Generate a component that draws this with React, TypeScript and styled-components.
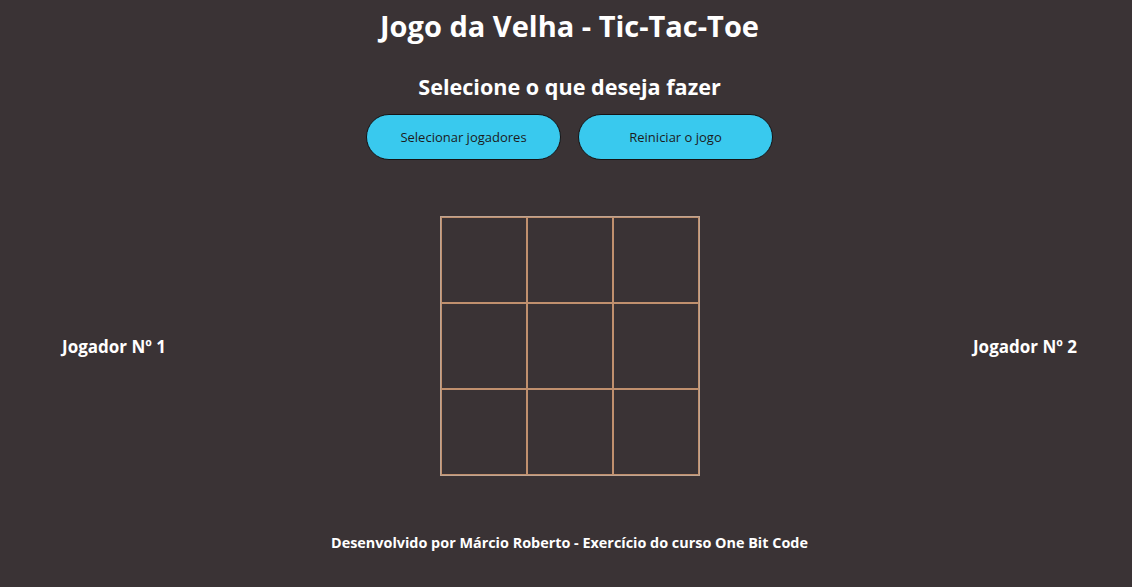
import React from "react";
import styled, { createGlobalStyle } from "styled-components";

const Global = createGlobalStyle`
  html, body { margin: 0; padding: 0; background: #3a3335; }
  body { font-family: "Open Sans", "Noto Sans", sans-serif; color: #ffffff; }
`;

const Page = styled.div`
  width: 1132px;
  height: 587px;
  box-sizing: border-box;
  padding-left: 7px;
  display: flex;
  flex-direction: column;
  align-items: center;
  background: #3a3335;
`;

const Title = styled.h1`
  margin: 6px 0 0;
  font-size: 29px;
  line-height: 40px;
  font-weight: 700;
`;

const Subtitle = styled.h2`
  margin: 27px 0 0;
  font-size: 21.6px;
  line-height: 28px;
  font-weight: 700;
`;

const Actions = styled.div`
  display: flex;
  gap: 17px;
  margin-top: 13px;
`;

const ActionButton = styled.button`
  width: 195px;
  height: 46px;
  border-radius: 23px;
  border: 1px solid #161314;
  background: #39c9ee;
  color: #1c1c1c;
  font-family: "Open Sans", sans-serif;
  font-size: 13px;
  cursor: pointer;
`;

const Arena = styled.div`
  align-self: stretch;
  display: flex;
  justify-content: space-between;
  align-items: center;
  padding: 0 55px;
  margin-top: 56px;
`;

const PlayerLabel = styled.div`
  font-size: 17px;
  font-weight: 700;
`;

const Board = styled.div`
  display: grid;
  grid-template-columns: repeat(3, 86px);
  grid-template-rows: repeat(3, 86px);
  border: 1px solid #bfa592;
`;

const Cell = styled.div`
  border: 1px solid #c0906e;
`;

const Footer = styled.footer`
  margin-top: 57px;
  font-size: 14.4px;
  font-weight: 700;
`;

export default function App() {
  return (
    <>
      <Global />
      <Page>
        <Title>Jogo da Velha - Tic-Tac-Toe</Title>
        <Subtitle>Selecione o que deseja fazer</Subtitle>
        <Actions>
          <ActionButton>Selecionar jogadores</ActionButton>
          <ActionButton>Reiniciar o jogo</ActionButton>
        </Actions>
        <Arena>
          <PlayerLabel>Jogador Nº 1</PlayerLabel>
          <Board>
            {Array.from({ length: 9 }).map((_, i) => (
              <Cell key={i} />
            ))}
          </Board>
          <PlayerLabel>Jogador Nº 2</PlayerLabel>
        </Arena>
        <Footer>Desenvolvido por Márcio Roberto - Exercício do curso One Bit Code</Footer>
      </Page>
    </>
  );
}
